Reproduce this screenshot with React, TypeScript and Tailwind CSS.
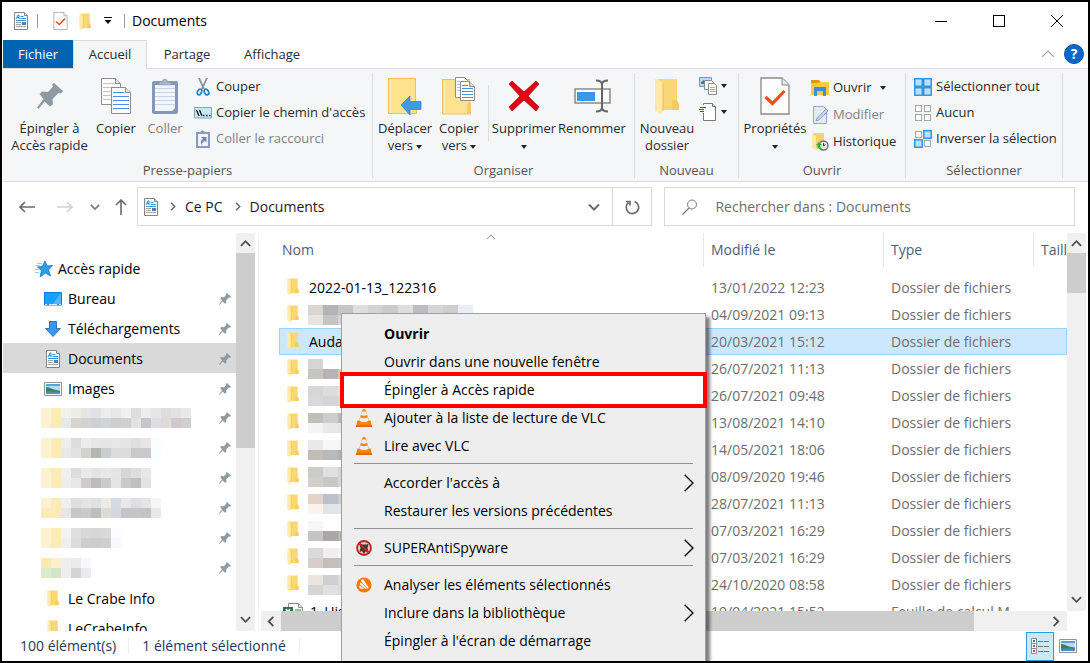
import type { ReactNode } from 'react';

type IconProps = { className?: string };

const DocIcon = ({ className = 'w-[18px] h-[18px]' }: IconProps) => (
  <svg viewBox="0 0 18 18" className={className} aria-hidden="true">
    <path d="M2.500.5h10l3 3v14h-13z" fill="#fbfbfb" stroke="#858585" />
    <path d="M12.500.5v3h3" fill="#ddd" stroke="#858585" />
    <path d="M4 7l2-4h1v4M5 5.500h2" stroke="#1583d8" strokeWidth=".9" fill="none" />
    <path d="M8.500 4.500h3M8.500 6.500h5.500M4 8.500h10" stroke="#2c93df" />
    <path d="M10 10h4v3h-4z" fill="#4a7fbd" />
    <path d="M4 10.500h5M4 12.500h5M4 14.500h10" stroke="#a5a5a5" />
  </svg>
);

const CheckDocIcon = ({ className = 'w-4 h-[18px]' }: IconProps) => (
  <svg viewBox="0 0 30 38" className={className} aria-hidden="true">
    <path d="M1 1h21l7 7v29H1z" fill="#fdfdfd" stroke="#8a8a8a" strokeWidth="1.300" />
    <path d="M22 1v7h7" fill="#e8e8e8" stroke="#8a8a8a" />
    <path d="M5.500 20l7 6.500L24.500 14" fill="none" stroke="#f04e12" strokeWidth="3.200" />
  </svg>
);

const FolderIcon = ({ className = 'w-3 h-[17px]' }: IconProps) => (
  <svg viewBox="0 0 24 36" className={className} aria-hidden="true">
    <path d="M3 1h19v23l2 3v5H6z" fill="#f8d775" />
    <path d="M17 22h5l2 4v6h-7z" fill="#f3cd64" />
    <path d="M0 1h2l6 4v28l-2 3-6-3z" fill="#ffe9a6" />
    <path d="M8 5v28" stroke="#e9bd50" strokeWidth="1" />
  </svg>
);

const PinIcon = ({ className = 'w-3 h-3' }: IconProps) => (
  <svg viewBox="0 0 26 26" className={className} aria-hidden="true">
    <path d="M17 0l9 8-2 2.500-2.500-.5-6 6 .5 5-3 2.500-5.500-5L1.500 26 0 24.500 6.500 16 2.500 11l2.500-2.500 6 .5 5-5.500-1-1.500z" fill="#8f9ba3" />
  </svg>
);

const PictureIcon = ({ className = 'w-[18px] h-[14px]' }: IconProps) => (
  <svg viewBox="0 0 18 14" className={className} aria-hidden="true">
    <path d="M.5.5h17v13H.5z" fill="#fff" stroke="#8d949b" />
    <path d="M2 2h14v10H2z" fill="#b9dcf5" />
    <path d="M2 2h14v2H2z" fill="#5a9ee0" />
    <path d="M2 5c4 0 6 3 14 3.500V10H2z" fill="#3e7c63" />
    <path d="M2 9.500h14V12H2z" fill="#4c8fc4" />
  </svg>
);

const DownCaret = () => (
  <svg viewBox="0 0 6 4" className="w-[6px] h-1 inline-block" aria-hidden="true">
    <path d="M0 0h6L3 4z" fill="#222" />
  </svg>
);

const Chevron = ({ d, className }: { d: 'up' | 'down' | 'left' | 'right'; className: string }) => {
  const paths = { up: 'M1 8.500L6 3.500l5 5', down: 'M1 3.500l5 5 5-5', left: 'M8 1L3 6l5 5', right: 'M4 1l5 5-5 5' };
  return (
    <svg viewBox="0 0 12 12" className={className} fill="none" stroke="currentColor" aria-hidden="true">
      <path d={paths[d]} />
    </svg>
  );
};

const CopyIcon = ({ className = 'w-[30px] h-9' }: IconProps) => (
  <svg viewBox="0 0 30 36" className={className} aria-hidden="true">
    <path d="M.5.5h14l5 5v21H.5z" fill="#fdfdfd" stroke="#8d8d8d" />
    <path d="M14.500.5v5h5" fill="#e4e4e4" stroke="#8d8d8d" />
    <path d="M2 5.500h11M2 9.500h14M2 13.500h14M2 17.500h14M2 21.500h10" stroke="#a9c8f2" />
    <path d="M10.500 9.500h14l5 5v21h-19z" fill="#fdfdfd" stroke="#8d8d8d" />
    <path d="M24.500 9.500v5h5" fill="#e4e4e4" stroke="#8d8d8d" />
    <path d="M12 14.500h11M12 18.500h16M12 22.500h16M12 26.500h16M12 30.500h16" stroke="#4a8fe7" />
  </svg>
);

const ClipboardIcon = () => (
  <svg viewBox="0 0 26 36" className="w-[26px] h-9" aria-hidden="true">
    <rect y="3" width="26" height="33" rx="2" fill="#8596b8" />
    <path d="M3 7h20v23l-3 3H3z" fill="#f3f6fc" />
    <path d="M3 10.500h20M3 14.500h20M3 18.500h20M3 22.500h20M3 26.500h20" stroke="#c9d4e8" />
    <path d="M7 4h3.500a2.500 3 0 015 0H19v3H7z" fill="#a8b6cf" stroke="#7c8cac" strokeWidth=".5" />
  </svg>
);

const MoveFolder = () => (
  <svg viewBox="0 0 34 38" className="w-[34px] h-[38px]" aria-hidden="true">
    <path d="M.5 1.500h27v23l1 2v10H.5z" fill="#fee28d" stroke="#e7c35a" />
    <path d="M2.500 3v33" stroke="#fff0bd" />
    <path d="M13 28l9-9v5.500h11v8H22V38z" fill="#3f9ae3" stroke="#2b80c9" strokeWidth=".7" />
  </svg>
);

const CopyFolder = () => (
  <svg viewBox="0 0 34 38" className="w-[34px] h-[38px]" aria-hidden="true">
    <path d="M.5 2.500h27v23l1 2v9.500H.5z" fill="#fee28d" stroke="#e7c35a" />
    <path d="M2.500 4v32" stroke="#fff0bd" />
    <path d="M13.500.5h9l3 3v17h-12z" fill="#fff" stroke="#8d8d8d" />
    <path d="M15 4.500h8M15 7.500h9M15 10.500h9M15 13.500h9" stroke="#9ec3ef" />
    <path d="M18.500 4.500h9l5 5v14h-14z" fill="#fff" stroke="#8d8d8d" />
    <path d="M27.500 4.500v5h5" fill="#ddd" stroke="#8d8d8d" />
    <path d="M20 8.500h6M20 11.500h11M20 14.500h11M20 17.500h11M20 20.500h11" stroke="#4a8fe7" />
    <path d="M25 27l2-2h2v12h-4z" fill="#f1cc62" />
  </svg>
);

const DeleteIcon = () => (
  <svg viewBox="0 0 32 32" className="w-8 h-8" aria-hidden="true">
    <path d="M4 1l12 11L28 1l3 3-11 12 11 11-3 4-12-11L4 31l-3-4 11-11L1 4z" fill="#e60012" stroke="#9f1620" strokeWidth=".8" />
  </svg>
);

const RenameIcon = () => (
  <svg viewBox="0 0 37 34" className="w-[37px] h-[34px]" aria-hidden="true">
    <path d="M1 10h35v14H1z" fill="#fff" stroke="#8a8a8a" strokeWidth="1.500" />
    <path d="M3 13h18v9H3z" fill="#3797e8" />
    <path d="M22 1.500c3 0 6 1 6 4 0-3 3-4 6-4M28 4v26M22 32.500c3 0 6-1 6-4 0 3 3 4 6 4" fill="none" stroke="#666" strokeWidth="2" />
  </svg>
);

const CutIcon = () => (
  <svg viewBox="0 0 18 18" className="w-[18px] h-[18px]" fill="none" aria-hidden="true">
    <path d="M5 0l5 11M13 0L8 11" stroke="#8b9197" strokeWidth="1.800" />
    <ellipse cx="5.500" cy="14" rx="2" ry="3" transform="rotate(25 5.500 14)" stroke="#1c84c9" strokeWidth="1.800" />
    <ellipse cx="12.500" cy="14" rx="2" ry="3" transform="rotate(-25 12.500 14)" stroke="#1c84c9" strokeWidth="1.800" />
  </svg>
);

const PathIcon = () => (
  <svg viewBox="0 0 18 12" className="w-[18px] h-3" aria-hidden="true">
    <path d="M.5.500h17v10.500H.500z" fill="#c9e7fb" stroke="#7fa3bd" />
    <path d="M2.500 3l2.500 6M5.500 3L8 9M9 8.500h1.500M12 8.500h1.500M15 8.500h1.500" stroke="#111" strokeWidth="1.300" />
  </svg>
);

const ShortcutIcon = () => (
  <svg viewBox="0 0 18 18" className="w-[18px] h-[18px]" aria-hidden="true">
    <path d="M2 2h4l2.500-2L11 2h5v16H2z" fill="#8b9bbb" />
    <path d="M4 4h10v12H4z" fill="#eef2f9" />
    <path d="M7 7h5.500v5.500L11 11c-2 .5-3 2-3 4-2-3-1-5 1-6z" fill="#7486a9" />
  </svg>
);

const NewItemIcon = () => (
  <svg viewBox="0 0 18 18" className="w-[18px] h-[18px]" aria-hidden="true">
    <path d="M.5.500h12v9H.500z" fill="#b5def5" stroke="#6f9ab3" />
    <path d="M2 5l3-2 3 4H2z" fill="#3d7f86" />
    <path d="M5.500 3.500h7l2 2v7h-9z" fill="#f4f7fa" stroke="#848b91" />
    <path d="M9.500 6.500h6l2 2v9h-8z" fill="#fff" stroke="#848b91" />
    <path d="M11 10.500h5M11 12.500h5M11 14.500h5" stroke="#85aee2" />
  </svg>
);

const EasyAccessIcon = () => (
  <svg viewBox="0 0 18 18" className="w-[18px] h-[18px]" aria-hidden="true">
    <path d="M4.500 2V.500h9l3 3v14h-12V10" fill="#fff" stroke="#777" />
    <path d="M13.500.500v3h3" fill="#ddd" stroke="#777" />
    <path d="M1 4.500h6M0 6.500h5M1 8.500h4" stroke="#1265ad" strokeWidth="1.200" />
  </svg>
);

const OpenIcon = () => (
  <svg viewBox="0 0 18 16" className="w-[18px] h-4" aria-hidden="true">
    <path d="M0 0h8l2 2h8v13H0z" fill="#ffc93f" />
    <path d="M0 0h8l1 2-1 1H0z" fill="#dd9a00" />
    <path d="M3 16V7h12v9h-3v-5H6v5z" fill="#3b8fdb" />
  </svg>
);

const EditIcon = () => (
  <svg viewBox="0 0 18 18" className="w-[18px] h-[18px]" aria-hidden="true">
    <path d="M2.500.500h10l3 3v14h-13z" fill="#e3eaf6" stroke="#9aaac6" />
    <path d="M5 15l1-3L15 3l2 2-9 9z" fill="#c5d2e8" stroke="#8597ba" strokeWidth=".8" />
  </svg>
);

const HistoryIcon = () => (
  <svg viewBox="0 0 18 18" className="w-[18px] h-[18px]" aria-hidden="true">
    <path d="M2 0h11v16H5z" fill="#f6d36c" />
    <path d="M1 0l4 3v14l-4-2z" fill="#ffe9a6" />
    <circle cx="12.500" cy="12.500" r="4.500" fill="#e9e9e9" stroke="#707070" strokeWidth="1.400" />
    <path d="M12.500 10v3l2-1.500" fill="none" stroke="#444" />
    <path d="M5 12l3-3 3 3H9c0 2 1 3 2 4-3 0-5-1-4.500-4z" fill="#2cae3f" />
  </svg>
);

const GridIcon = ({ on }: { on: number[] }) => (
  <svg viewBox="0 0 18 18" className="w-[18px] h-[18px]" aria-hidden="true">
    {[0, 1, 2, 3].map((i) => {
      const lit = on.includes(i);
      const x = (i % 2) * 9;
      const y = Math.floor(i / 2) * 9;
      return lit
        ? <rect key={i} x={x + 0.75} y={y + 0.75} width="7.500" height="7.500" fill="#b8e1fb" stroke="#2a90df" strokeWidth="1.400" />
        : <rect key={i} x={x + 1.5} y={y + 1.5} width="6" height="6" fill="#fcfcfc" stroke="#a6a6a6" />;
    })}
  </svg>
);

const VlcIcon = () => (
  <svg viewBox="0 0 16 18" className="w-4 h-[18px]" aria-hidden="true">
    <path d="M1.500 11.500h13L16 17.500H0z" fill="#f08000" />
    <path d="M0 16.500h16v1.500H0z" fill="#d96c00" />
    <path d="M8 0c1 0 1.500.5 2 2l3.500 11.500c-2 2-9 2-11 0L6 2c.5-1.500 1-2 2-2z" fill="#f7861e" />
    <path d="M6 2.500h4l1 3.500c-1.500 1-4.500 1-6 0zM4.200 8.500c2 1 5.600 1 7.600 0l1 3.300c-2.500 1.600-7.100 1.600-9.600 0z" fill="#efedea" />
  </svg>
);

const SpyIcon = () => (
  <svg viewBox="0 0 16 16" className="w-4 h-4" aria-hidden="true">
    <circle cx="8" cy="8" r="7" fill="#d8ccc6" stroke="#c9201b" strokeWidth="1.800" />
    <path d="M3.500 4l2 .5h5l2-.5-1 4 1 4-2.500-1-2 3-2-3-2.500 1 1-4z" fill="#4b2f29" />
    <path d="M3 3l10 10" stroke="#c9201b" strokeWidth="1.800" />
  </svg>
);

const AvastIcon = () => (
  <svg viewBox="0 0 16 16" className="w-4 h-4" aria-hidden="true">
    <circle cx="8" cy="8" r="7.600" fill="#ff7800" />
    <path d="M6 2.500c.9-.3 1.700.2 2 1l4.500 7-.8 1L5.300 4.500c-.5-.8-.1-1.700.7-2zM4 6c.5-.5 1.200-.4 1.900.2L11 11.800H9.300L4.300 7.700C3.700 7.200 3.600 6.500 4 6zM3.200 9c.3-.5 1-.5 1.500-.1l3.300 2.900H5c-1.300-.3-2.200-1.900-1.800-2.800z" fill="#fff" />
  </svg>
);

const TileIcon = () => (
  <svg viewBox="0 0 16 16" className="w-4 h-4" aria-hidden="true">
    <path d="M8 0l6 3v10l-6 3-6-3V3z" fill="#3cc0f0" />
  </svg>
);

const ExcelIcon = () => (
  <svg viewBox="0 0 20 18" className="w-5 h-[18px]" aria-hidden="true">
    <path d="M5.500.500h10l4 4v13h-14z" fill="#fff" stroke="#8b8b8b" />
    <path d="M15.500.500v4h4" fill="#eee" stroke="#8b8b8b" />
    <path d="M12 6h6v2h-6zM12 9h6v2h-6z" fill="#8cc5a3" />
    <path d="M0 4h10v11H0z" fill="#1f7244" />
    <path d="M3 6l4 6M7 6l-4 6" stroke="#fff" strokeWidth="1.500" />
  </svg>
);

const StarIcon = () => (
  <svg viewBox="0 0 18 16" className="w-[18px] h-4" aria-hidden="true">
    <path d="M10 0l2 5 5.500-.5-4 4.500 2 6-5-3-5.500 4 1.500-6.500L2.500 6l5-.5z" fill="#2d9fe8" stroke="#1274c4" strokeWidth=".8" />
    <path d="M2 2.500h5M1 4.500h4M0 8.500h4M0 11.500h4" stroke="#8bcdf5" />
  </svg>
);

const DesktopIcon = () => (
  <svg viewBox="0 0 18 14" className="w-[18px] h-[14px]" aria-hidden="true">
    <path d="M.5.500h17v12.500H.500z" fill="#18a0fb" stroke="#0c79cf" />
    <path d="M9 12L17 1v11z" fill="#4db8ff" />
    <path d="M1 12.500h2M5 12.500h8M15 12.500h2" stroke="#d6eeff" />
  </svg>
);

const DownloadIcon = () => (
  <svg viewBox="0 0 16 16" className="w-4 h-4" aria-hidden="true">
    <path d="M4.500.500h7v7H15.500L8 15.500.500 7.500h4z" fill="#3b97e6" stroke="#2578c2" />
  </svg>
);

// One string per line of pixels, colours separated by spaces
const Mosaic = ({ lines, cell = 10 }: { lines: string[]; cell?: number }) => {
  const grid = lines.map((l) => l.split(' '));
  const cols = Math.max(...grid.map((g) => g.length));
  return (
    <svg width={cols * cell} height={grid.length * 10} shapeRendering="crispEdges" className="shrink-0" aria-hidden="true">
      {grid.map((g, y) => g.map((c, x) => (
        <rect key={`${x}-${y}`} x={x * cell} y={y * 10} width={cell} height="10" fill={`#${c}`} />
      )))}
    </svg>
  );
};

const BigButton = ({ icon, label, className, disabled }: { icon: ReactNode; label: ReactNode; className: string; disabled?: boolean }) => (
  <button className={`flex flex-col items-center shrink-0 pt-[3px] ${disabled ? 'text-[#838383]' : ''} ${className}`}>
    <span className="h-[40px] mb-1 flex items-center justify-center">{icon}</span>
    <span className="leading-[17px] text-center whitespace-nowrap">{label}</span>
  </button>
);

const SmallButton = ({ icon, label, disabled }: { icon: ReactNode; label: ReactNode; disabled?: boolean }) => (
  <button className={`flex items-center gap-1 h-[26px] whitespace-nowrap ${disabled ? 'text-[#838383]' : ''}`}>
    <span className="w-[18px] flex justify-center">{icon}</span>
    {label}
  </button>
);

const Group = ({ title, className, children }: { title: string; className: string; children: ReactNode }) => (
  <section className={`flex flex-col shrink-0 border-r border-[#dcdddf] mt-1 mb-[3px] ${className}`}>
    <div className="flex-1 flex items-start">{children}</div>
    <h2 className="text-center leading-4 text-[#565656]">{title}</h2>
  </section>
);

const Ribbon = () => (
  <div className="flex h-[114px] shrink-0 bg-[#f5f6f7] border-y border-[#dadbdc] text-[13px] text-[#2b2b2b] overflow-hidden">
    <Group title="Presse-papiers" className="w-[370px]">
      <BigButton className="w-[93px]" icon={<PinIcon className="w-[26px] h-[26px]" />} label={<>Épingler à<br />Accès rapide</>} />
      <BigButton className="w-10" icon={<CopyIcon />} label="Copier" />
      <BigButton className="w-[58px]" icon={<ClipboardIcon />} label="Coller" disabled />
      <div className="flex flex-col pt-px">
        <SmallButton icon={<CutIcon />} label="Couper" />
        <SmallButton icon={<PathIcon />} label="Copier le chemin d'accès" />
        <SmallButton icon={<ShortcutIcon />} label="Coller le raccourci" disabled />
      </div>
    </Group>
    <Group title="Organiser" className="w-[262px]">
      <BigButton className="w-16" icon={<MoveFolder />} label={<>Déplacer<br />vers <DownCaret /></>} />
      <BigButton className="w-11" icon={<CopyFolder />} label={<>Copier<br />vers <DownCaret /></>} />
      <div className="w-px h-14 mt-3 ml-[7px] bg-[#dcdddf]" />
      <BigButton className="w-[70px]" icon={<DeleteIcon />} label={<>Supprimer<br /><DownCaret /></>} />
      <BigButton className="w-[66px]" icon={<RenameIcon />} label="Renommer" />
    </Group>
    <Group title="Nouveau" className="w-[104px]">
      <BigButton className="w-16" icon={<FolderIcon className="w-6 h-[36px]" />} label={<>Nouveau<br />dossier</>} />
      <div className="flex flex-col">
        <SmallButton icon={<NewItemIcon />} label={<DownCaret />} />
        <SmallButton icon={<EasyAccessIcon />} label={<DownCaret />} />
      </div>
    </Group>
    <Group title="Ouvrir" className="w-[167px]">
      <BigButton className="w-[72px]" icon={<CheckDocIcon className="w-[30px] h-[38px]" />} label={<>Propriétés<br /><DownCaret /></>} />
      <div className="flex flex-col gap-px pt-[2px]">
        <SmallButton icon={<OpenIcon />} label={<span className="flex items-center gap-2">Ouvrir <DownCaret /></span>} />
        <SmallButton icon={<EditIcon />} label="Modifier" disabled />
        <SmallButton icon={<HistoryIcon />} label="Historique" />
      </div>
    </Group>
    <Group title="Sélectionner" className="w-[157px]">
      <div className="flex flex-col pt-px pl-2">
        <SmallButton icon={<GridIcon on={[0, 1, 2, 3]} />} label="Sélectionner tout" />
        <SmallButton icon={<GridIcon on={[]} />} label="Aucun" />
        <SmallButton icon={<GridIcon on={[1, 2]} />} label="Inverser la sélection" />
      </div>
    </Group>
  </div>
);

const TitleBar = () => (
  <header className="flex items-center h-[38px] shrink-0 pl-[9px] pr-[2px]">
    <DocIcon />
    <div className="w-px h-[14px] bg-[#9a9a9a] ml-[7px] mr-[15px]" />
    <CheckDocIcon className="w-[15px] h-[18px]" />
    <FolderIcon className="w-3 h-[17px] ml-[11px]" />
    <svg viewBox="0 0 8 8" className="w-2 h-2 ml-[13px]" aria-hidden="true">
      <path d="M0 .500h8" stroke="#111" />
      <path d="M.500 3h7L4 7z" fill="#111" />
    </svg>
    <div className="w-px h-[14px] bg-[#9a9a9a] ml-3 mr-[7px]" />
    <h1 className="text-sm text-black">Documents</h1>
    <div className="ml-auto flex self-stretch">
      <button className="w-[58px] flex items-center justify-center" aria-label="Réduire"><span className="w-3 h-px bg-black" /></button>
      <button className="w-[58px] flex items-center justify-center" aria-label="Agrandir"><span className="w-3 h-3 border border-black" /></button>
      <button className="w-[58px] flex items-center justify-center" aria-label="Fermer">
        <svg viewBox="0 0 12 12" className="w-3 h-3" aria-hidden="true"><path d="M0 0l12 12M12 0L0 12" stroke="#000" /></svg>
      </button>
    </div>
  </header>
);

const Tabs = () => (
  <nav className="relative z-10 flex h-7 shrink-0 text-[13px] text-[#2b2b2b]">
    <button className="w-[70px] pt-px bg-[#0063b1] text-white">Fichier</button>
    <button className="w-[74px] -mb-px bg-[#f5f6f7] border border-b-0 border-[#dadbdc]">Accueil</button>
    <button className="w-20 pt-px">Partage</button>
    <button className="w-[90px] pt-px">Affichage</button>
    <button className="ml-auto mr-[9px] text-[#a0a0a0]" aria-label="Réduire le ruban"><Chevron d="up" className="w-[14px] h-[14px]" /></button>
    <button className="w-5 h-5 mt-1 mr-1 rounded-full bg-[#0b67c9] border border-[#08529f] text-white text-sm leading-4 font-bold" aria-label="Aide">?</button>
  </nav>
);

const AddressBar = () => (
  <div className="flex items-center shrink-0 pt-[5px] pb-[7px] pl-4 pr-[13px] text-sm text-[#1a1a1a]">
    <button aria-label="Précédent" className="text-[#6b6b6b]">
      <svg viewBox="0 0 16 14" className="w-4 h-[14px]" fill="none" stroke="currentColor" strokeWidth="1.600"><path d="M6 2L1 7l5 5M1 7h15" /></svg>
    </button>
    <button aria-label="Suivant" className="ml-[22px] text-[#d2d2d2]">
      <svg viewBox="0 0 16 14" className="w-4 h-[14px]" fill="none" stroke="currentColor" strokeWidth="1.600"><path d="M10 2l5 5-5 5M15 7H0" /></svg>
    </button>
    <button aria-label="Emplacements récents" className="ml-[17px] text-[#7a7a7a]"><Chevron d="down" className="w-[10px] h-[10px] stroke-2" /></button>
    <button aria-label="Dossier parent" className="ml-[15px] text-[#6b6b6b]">
      <svg viewBox="0 0 12 16" className="w-3 h-4" fill="none" stroke="currentColor" strokeWidth="1.600"><path d="M1 6l5-5 5 5M6 1v15" /></svg>
    </button>
    <div className="flex items-center flex-[510] min-w-0 h-[39px] ml-[10px] pl-1 border border-[#d9d9d9]">
      <DocIcon />
      <Chevron d="right" className="w-[9px] h-[9px] ml-[8px] text-[#6b6b6b] stroke-2" />
      <a href="#" className="ml-2">Ce PC</a>
      <Chevron d="right" className="w-[9px] h-[9px] ml-[10px] text-[#6b6b6b] stroke-2" />
      <a href="#" className="ml-2">Documents</a>
      <button aria-label="Emplacements" className="ml-auto mr-3 text-[#6b6b6b]"><Chevron d="down" className="w-3 h-3 stroke-2" /></button>
      <button aria-label="Actualiser" className="w-[39px] self-stretch border-l border-[#d9d9d9] flex items-center justify-center text-[#6b6b6b]">
        <svg viewBox="0 0 16 16" className="w-4 h-4" fill="none" stroke="currentColor" strokeWidth="1.700">
          <path d="M10.500 2.500A6.200 6.200 0 114.500 3.500M2 2.500h4v4" />
        </svg>
      </button>
    </div>
    <label className="flex items-center flex-[393] min-w-0 h-[39px] ml-3 pl-4 border border-[#d9d9d9]">
      <svg viewBox="0 0 18 18" className="w-[18px] h-[18px] shrink-0" fill="none" stroke="#777" aria-hidden="true">
        <circle cx="11" cy="6.500" r="4.500" /><path d="M8 10L1.500 16.500" strokeWidth="1.200" />
      </svg>
      <input type="text" aria-label="Rechercher" placeholder="Rechercher dans : Documents" className="ml-4 flex-1 min-w-0 outline-none placeholder:text-[#6d6d6d]" />
    </label>
  </div>
);

const VScroll = ({ size }: { size: string }) => (
  <div className="flex flex-col w-[19px] shrink-0 bg-[#f0f0f0] text-[#505050]">
    <span className="h-5 shrink-0 flex items-center justify-center"><Chevron d="up" className="w-[11px] h-[11px] stroke-2" /></span>
    <div className="flex-1 min-h-0"><div className={`bg-[#cdcdcd] ${size}`} /></div>
    <span className="h-6 shrink-0 flex items-center justify-center"><Chevron d="down" className="w-[11px] h-[11px] stroke-2" /></span>
  </div>
);

const places: { label?: string; icon?: ReactNode; lines?: string[]; pinned?: boolean; active?: boolean }[] = [
  { label: 'Bureau', icon: <DesktopIcon />, pinned: true },
  { label: 'Téléchargements', icon: <DownloadIcon />, pinned: true },
  { label: 'Documents', icon: <DocIcon />, pinned: true, active: true },
  { label: 'Images', icon: <PictureIcon />, pinned: true },
  {
    pinned: true,
    lines: [
      'fdf1d0 fcebba f0f1f1 edece6 e6e6e6 dee3e7 ededed e7e7e7 f1f1f1 dcdee0 ededee e6e6e6 dddddd dfe2e6 e8e8e8',
      'fdf1d0 fcebba e8e8e8 d9d5ce d3d3d3 cdd1d1 cfd4d5 cecece d2d0d0 e2e2e2 c6c5c8 dbdee4 dedcd8 d1c9cb cfcfd2',
    ],
  },
  {
    pinned: true,
    lines: [
      'fdf1d0 fcebba eeeeee dddddf ebeceb e7e7e7 e6e6e6 e7e7e7 e5e5e5 dfe0e3 e6e6e6 fafdff',
      'fdf1d0 fcebba e8e8e9 e2e2e3 d3d2d0 b7b5b1 c8cdd2 dadcde dbddd8 cac8ca c9c9cb f8fdff',
    ],
  },
  {
    pinned: true,
    lines: [
      'fdf1d0 fcebba efefef dddddd e9ebea e5e5e5 e8e8e8 e5e5e5 d6d6d9 dedede e8e8e8',
      'fdf1d0 fcebba ededed e8e8e8 cfcbcd bdbcba cbcbcd e4e4e4 cac8c9 bfc0c3 e3e3e3',
    ],
  },
  {
    pinned: true,
    lines: [
      'fdf1d0 fcebba eeefef dfdfdf e5e4e4 dde1e4 eeebe6 d7dbe2 e8e8e8 dedfe0 e4e6e6 f5f6f6',
      'fdebbb fcebba e6e6e4 c7c7c7 cacaca bebec0 dedad5 d5d9df c5c5c5 c6c6c6 c2c5c5 e8e8e8',
    ],
  },
  {
    pinned: true,
    lines: [
      'fdf1d0 fcebba f3f3f3 dedfdf d7d8d8 d5d6d6 d9d9d9 fbfcff',
      'fdf1d0 fcebba eeeeee dddddd cecece cccdcc cfcfcf f8f9fc',
    ],
  },
  {
    pinned: true,
    lines: [
      'fbe8b4 fdf0cd efefee ebebeb f7f8fc',
      'dcebcb d3e5c9 eeeeee d5d4d4 e9eaec',
    ],
  },
  { label: 'Le Crabe Info', icon: <FolderIcon /> },
  { label: 'LeCrabeInfo', icon: <FolderIcon /> },
];

const Sidebar = () => (
  <aside className="flex w-[256px] shrink-0 border-r border-[#f0f0f0] pr-[3px] text-sm text-black">
    <ul className="flex-1 min-w-0 overflow-hidden pt-5">
      <li className="flex items-center h-[30px] pt-px pl-8 gap-[5px]"><StarIcon />Accès rapide</li>
      {places.map((p, i) => (
        <li key={i} className={`flex items-center h-[30px] pr-[5px] ${p.active ? 'bg-[#d9d9d9]' : ''} ${p.label ? 'pt-px pl-[41px]' : 'pl-[38px]'}`}>
          {p.lines ? <Mosaic lines={p.lines} /> : (
            <>
              <span className="w-[18px] mr-[6px] flex justify-center">{p.icon}</span>
              {p.label}
            </>
          )}
          {p.pinned && <PinIcon className="w-3 h-3 ml-auto" />}
        </li>
      ))}
    </ul>
    <VScroll size="h-[55%]" />
  </aside>
);

type Row = { name?: string; lines?: string[]; date: string; type?: string; selected?: boolean };

const rows: Row[] = [
  { name: '2022-01-13_122316', date: '13/01/2022 12:23' },
  { lines: ['d9d5d1 b4b4b4 c5c5c6 e0ddde d3d4d5 c9cbcc dedede bcbdc2 d5d5d6 cecece e9eef5', 'e7e3df c4c4c4 d4d4d0 dddddd'], date: '04/09/2021 09:13' },
  { name: 'Audacity', date: '20/03/2021 15:12', selected: true },
  { lines: ['d5d5d6 ffffff ffffff', 'c5c6c2 b8b3b7 cbcbcb'], date: '26/07/2021 11:13' },
  { lines: ['d6d6d6 dddddd e3e3e5', 'd9d9db d6d4d6 d5dadd'], date: '26/07/2021 09:48' },
  { lines: ['c0c0bb cdcdcd b7b8bb', 'f3f4f4 e8e8e8 e5e5e5'], date: '13/08/2021 14:10' },
  { lines: ['e8eae7 f6f6f6 f5f5f5', 'c3bdb6 b8b9b9 b2afb0'], date: '14/05/2021 18:06' },
  { lines: ['cbccca dfe1df d9d4d2', 'd4ceca c9c8c7 dbd6d6'], date: '08/09/2020 19:46' },
  { lines: ['e3d5c5 bac0cc cfcfd1', 'fbf2ec e1e4e9 e5e5e5'], date: '28/07/2021 11:13' },
  { lines: ['f7f7f7 ffffff ffffff', 'c5c5c5 a9a8a7 bab4b0'], date: '07/03/2021 16:29' },
  { lines: ['dadada f1efee f3f3f3', 'd5ceca c2bfbc c5c2c0'], date: '07/03/2021 16:29' },
  { lines: ['ece4df ced0d3 dcdddd', 'd6d5d5 e0e0e0 dcdcdc'], date: '24/10/2020 08:58' },
  { name: '1_Historique', date: '19/04/2021 15:52', type: 'Feuille de calcul M…' },
];

const FileList = () => (
  <main className="relative flex flex-col flex-1 min-w-0">
    <div className="flex flex-1 min-h-0">
      <div className="flex-1 min-w-0 overflow-hidden pl-5">
        <table className="w-full table-fixed text-sm text-[#6d6d6d] whitespace-nowrap">
          <colgroup>
            <col />
            <col className="w-[180px]" />
            <col className="w-[150px]" />
            <col className="w-[34px]" />
          </colgroup>
          <thead>
            <tr className="h-[41px] text-left text-[#4c607a] align-top">
              <th className="relative font-normal pl-[3px] leading-[34px]">
                Nom
                <Chevron d="up" className="absolute -top-px left-1/2 -translate-x-1/2 w-[10px] h-[10px] text-[#777]" />
              </th>
              <th className="font-normal"><div className="pl-[7px] leading-[34px] border-l border-[#e5e5e5]">Modifié le</div></th>
              <th className="font-normal"><div className="pl-[7px] leading-[34px] border-l border-[#e5e5e5]">Type</div></th>
              <th className="font-normal overflow-hidden"><div className="pl-[7px] leading-[34px] border-l border-[#e5e5e5]">Taille</div></th>
            </tr>
          </thead>
          <tbody>
            {rows.map((r, i) => (
              <tr key={i} className={`h-[27px] ${r.selected ? 'bg-[#cce8ff] outline outline-1 -outline-offset-1 outline-[#99d1ff]' : ''}`}>
                <td className="pl-2 text-black">
                  <div className="flex items-center h-[27px]">
                    {r.type
                      ? <span className="-ml-1 mr-[6px]"><ExcelIcon /></span>
                      : <span className="mb-[3px] mr-[9px]"><FolderIcon /></span>}
                    {r.lines ? <Mosaic lines={r.lines} cell={15} /> : <span className="pl-px">{r.name}</span>}
                  </div>
                </td>
                <td className="pl-2">{r.date}</td>
                <td className="pl-2 overflow-hidden">{r.type ?? 'Dossier de fichiers'}</td>
                <td />
              </tr>
            ))}
          </tbody>
        </table>
      </div>
      <VScroll size="h-[12%]" />
      <div className="w-[2px]" />
    </div>
    <div className="flex h-5 shrink-0 ml-[2px] mr-[21px] bg-[#f0f0f0] text-[#505050]">
      <span className="w-5 flex items-center justify-center"><Chevron d="left" className="w-[11px] h-[11px] stroke-2" /></span>
      <div className="flex-1"><div className="h-full w-[91%] bg-[#cdcdcd]" /></div>
      <span className="w-6 flex items-center justify-center"><Chevron d="right" className="w-[11px] h-[11px] stroke-2" /></span>
    </div>
  </main>
);

const MenuItem = ({ label, icon, sub, className = 'h-7' }: { label: string; icon?: ReactNode; sub?: boolean; className?: string }) => (
  <li>
    <button className={`flex items-center w-full pl-[14px] pr-3 whitespace-nowrap ${className}`}>
      <span className="w-4 mr-3 shrink-0">{icon}</span>
      {label}
      {sub && <Chevron d="right" className="w-5 h-5 ml-auto -mr-[5px] text-black stroke-[0.8]" />}
    </button>
  </li>
);

const Separator = () => <li role="separator" className="h-px bg-[#919191] mx-3 mt-[3px] mb-[5px]" />;

const ContextMenu = () => (
  <ul className="absolute z-20 left-[339px] top-[311px] w-[365px] pt-[6px] pb-1 bg-[#eeeeee] border border-[#a0a0a0] text-sm text-black shadow-[4px_4px_3px_rgba(0,0,0,0.5)]">
    <MenuItem label="Ouvrir" className="h-7 font-bold" />
    <MenuItem label="Ouvrir dans une nouvelle fenêtre" />
    <MenuItem label="Épingler à Accès rapide" className="relative h-8 -my-[2px] bg-white outline outline-4 -outline-offset-2 outline-[#ff0000]" />
    <MenuItem label="Ajouter à la liste de lecture de VLC" icon={<VlcIcon />} />
    <MenuItem label="Lire avec VLC" icon={<VlcIcon />} />
    <Separator />
    <MenuItem label="Accorder l'accès à" sub />
    <MenuItem label="Restaurer les versions précédentes" />
    <Separator />
    <MenuItem label="SUPERAntiSpyware" icon={<SpyIcon />} sub />
    <Separator />
    <MenuItem label="Analyser les éléments sélectionnés" icon={<AvastIcon />} />
    <MenuItem label="Inclure dans la bibliothèque" sub />
    <MenuItem label="Épingler à l'écran de démarrage" />
    <MenuItem label="" icon={<TileIcon />} />
  </ul>
);

const StatusBar = () => (
  <footer className="flex items-center h-[30px] shrink-0 pl-[17px] pr-[11px] text-sm text-[#1e395b]">
    <span className="pr-3 border-r border-[#eee] leading-4">100 élément(s)</span>
    <span className="px-[13px] border-r border-[#eee] leading-4">1 élément sélectionné</span>
    <button aria-label="Détails" className="ml-auto w-7 h-[29px] flex items-center justify-center bg-[#cce8f6] border border-[#26a0da]">
      <svg viewBox="0 0 18 16" className="w-[18px] h-4" aria-hidden="true">
        <path d="M.500.500h5v15h-5zM.500 5.500h5M.500 10.500h5" fill="#fff" stroke="#8c8c8c" />
        <path d="M2 2h2v2H2z" fill="#2e75c9" />
        <path d="M2 7h2v2H2z" fill="#3a9461" />
        <path d="M2 12h2v2H2z" fill="#d53b2b" />
        <path d="M7 3.500h5M13 3.500h5M7 8.500h5M13 8.500h5M7 13.500h5M13 13.500h5" stroke="#777" />
      </svg>
    </button>
    <button aria-label="Grandes icônes" className="ml-[5px]"><PictureIcon /></button>
  </footer>
);

const App = () => {
  return (
    <div className="relative flex flex-col h-screen overflow-hidden bg-white border-2 border-black pl-px font-['Open_Sans',sans-serif]">
      <TitleBar />
      <Tabs />
      <Ribbon />
      <AddressBar />
      <div className="flex flex-1 min-h-0">
        <Sidebar />
        <FileList />
      </div>
      <StatusBar />
      <ContextMenu />
    </div>
  );
};

export default App;
